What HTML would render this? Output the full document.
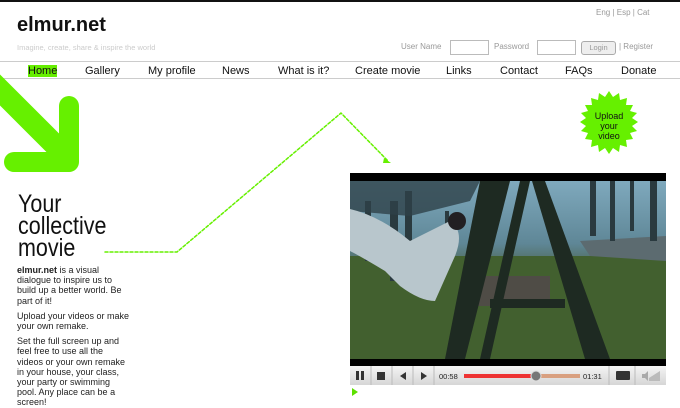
<!DOCTYPE html>
<html><head><style>
body{margin:0;width:680px;height:400px;overflow:hidden;background:#fff;font-family:"Liberation Sans",sans-serif;position:relative}
.a{position:absolute}
.nav span{position:absolute;top:65px;font-size:11px;color:#111}
</style></head><body>
<div class="a" style="left:0;top:0;width:680px;height:2px;background:#111"></div>
<div class="a" style="left:17px;top:14px;font-size:20px;font-weight:bold;color:#111">elmur.net</div>
<div class="a" style="left:17px;top:43px;font-size:7.5px;color:#ccc">Imagine, create, share &amp; inspire the world</div>
<div class="a" style="left:596px;top:8px;font-size:8px;color:#999">Eng | Esp | Cat</div>
<div class="a" style="left:401px;top:42px;font-size:8px;color:#999">User Name</div>
<div class="a" style="left:450px;top:40px;width:37px;height:13px;border:1px solid #bbb"></div>
<div class="a" style="left:494px;top:42px;font-size:8px;color:#999">Password</div>
<div class="a" style="left:537px;top:40px;width:37px;height:13px;border:1px solid #bbb"></div>
<div class="a" style="left:581px;top:41px;width:33px;height:12px;border:1px solid #aaa;border-radius:3px;background:#eee;font-size:7.5px;color:#999;text-align:center;line-height:12px">Login</div>
<div class="a" style="left:619px;top:42px;font-size:8px;color:#999">| Register</div>
<div class="a" style="left:0;top:61px;width:680px;height:1px;background:#ccc"></div>
<div class="a" style="left:0;top:78px;width:680px;height:1px;background:#ccc"></div>
<div class="nav">
<span style="left:28px;background:#66ee00">Home</span>
<span style="left:85px">Gallery</span>
<span style="left:148px">My profile</span>
<span style="left:222px">News</span>
<span style="left:278px">What is it?</span>
<span style="left:355px">Create movie</span>
<span style="left:446px">Links</span>
<span style="left:500px">Contact</span>
<span style="left:565px">FAQs</span>
<span style="left:621px">Donate</span>
</div>
<svg class="a" style="left:0;top:0" width="680" height="400">
<g stroke="#66f000" stroke-linecap="round" stroke-linejoin="round" fill="none">
<line x1="-10" y1="80" x2="62" y2="152" stroke-width="22"/>
<polyline points="69,106 69,162 14,162" stroke-width="20"/>
<polyline points="105,252 177,252 341,113 388,161" stroke-width="1.5" stroke-dasharray="3,2"/>
</g>
<polygon points="384,158 391,163 383,163" fill="#66f000"/>
<polygon fill="#66f000" points="
609,91 613,97 619,93 620,100 627,98 626,105 633,105 630,111 637,113 632,118 638,122 632,126 637,131 630,133 633,139 626,140 627,147 620,145 619,152 613,148 609,154 605,148 599,152 598,145 591,147 592,140 585,139 588,133 581,131 586,126 580,122 586,118 581,113 588,111 585,105 592,105 591,98 598,100 599,93 605,97"/>
<polygon fill="#5de000" points="352,388 358,392 352,396"/>
</svg>
<div class="a" style="left:585px;top:111px;width:48px;font-size:9px;text-align:center;line-height:10px;color:#111">Upload<br>your<br>video</div>
<div class="a" style="left:18px;top:193px;font-size:25px;line-height:22px;color:#111;transform:scaleX(0.86);transform-origin:0 0">Your<br>collective<br>movie</div>
<div class="a" style="left:17px;top:265px;width:113px;font-size:9px;line-height:10.2px;color:#222">
<b>elmur.net</b> is a visual dialogue to inspire us to build up a better world. Be part of it!<div style="height:5px"></div>Upload your videos or make your own remake.<div style="height:5px"></div>Set the full screen up and feel free to use all the videos or your own remake in your house, your class, your party or swimming pool. Any place can be a screen!</div>
<div class="a" style="left:350px;top:173px;width:316px;height:193px;background:#000"></div>
<svg class="a" style="left:350px;top:181px" width="316" height="178">
<defs><linearGradient id="g" x1="0" y1="0" x2="0" y2="1"><stop offset="0" stop-color="#7fa9bd"/><stop offset=".35" stop-color="#5f8797"/><stop offset=".5" stop-color="#4d6650"/><stop offset="1" stop-color="#3b5a2e"/></linearGradient></defs>
<rect width="316" height="178" fill="url(#g)"/>
<rect y="75" width="316" height="103" fill="#42602f"/>
<path d="M230 60 L316 55 L316 80 L240 75Z" fill="#5c6b70"/>
<g fill="#2a3a3f"><rect x="40" y="20" width="8" height="80"/><rect x="55" y="10" width="7" height="90"/><rect x="15" y="20" width="6" height="60"/><rect x="95" y="30" width="4" height="45"/><rect x="240" y="0" width="6" height="55"/><rect x="260" y="0" width="5" height="60"/><rect x="300" y="0" width="7" height="60"/><rect x="280" y="0" width="4" height="50"/></g>
<path d="M0 0 L130 0 L120 20 L60 35 L0 30Z" fill="#2e4148" opacity=".8"/>
<rect x="120" y="95" width="80" height="30" fill="#4f4c46"/>
<g fill="#1e2a22"><polygon points="130,0 160,0 115,178 95,178"/><polygon points="182,0 195,0 260,178 235,178"/><polygon points="170,0 180,0 140,178 130,178"/><rect x="140" y="118" width="75" height="9"/></g>
<path d="M0 28 Q30 35 60 60 L100 40 Q115 50 105 75 L85 120 Q70 120 50 105 L35 90 Q10 75 0 70Z" fill="#b8c6cc"/>
<circle cx="107" cy="40" r="9" fill="#221f22"/>
</svg>
<div class="a" style="left:350px;top:366px;width:316px;height:19px;background:linear-gradient(#f4f4f4,#d6d6d6)"></div>
<svg class="a" style="left:350px;top:366px" width="316" height="19">
<g stroke="#bbb"><line x1="21" y1="0" x2="21" y2="19"/><line x1="42" y1="0" x2="42" y2="19"/><line x1="63" y1="0" x2="63" y2="19"/><line x1="84" y1="0" x2="84" y2="19"/><line x1="259" y1="0" x2="259" y2="19"/><line x1="285" y1="0" x2="285" y2="19"/></g>
<g fill="#333"><rect x="6" y="5" width="3" height="9"/><rect x="11" y="5" width="3" height="9"/><rect x="27" y="6" width="8" height="8"/><polygon points="56,6 50,10 56,14"/><polygon points="71,6 77,10 71,14"/><rect x="266" y="5" width="14" height="9" rx="1"/></g>
<text x="89" y="13" font-size="7.5" fill="#222" font-family="Liberation Sans">00:58</text>
<rect x="114" y="8" width="73" height="4" fill="#e33"/><rect x="187" y="8" width="43" height="4" fill="#d9a080"/>
<circle cx="186" cy="10" r="5" fill="#777" stroke="#ddd"/>
<text x="233" y="13" font-size="7.5" fill="#222" font-family="Liberation Sans">01:31</text>
<polygon points="292,8 295,8 298,5 298,15 295,12 292,12" fill="#aaa"/>
<polygon points="299,12 310,5 310,15 299,15" fill="#bbb"/>
</svg>
</body></html>
